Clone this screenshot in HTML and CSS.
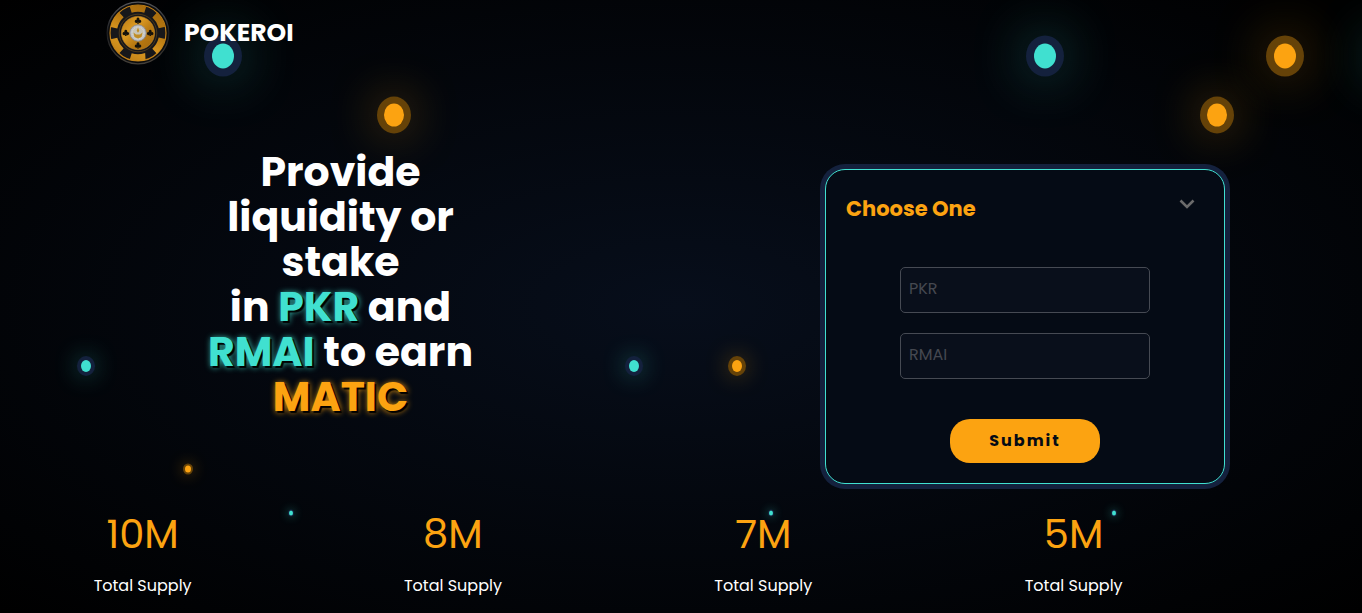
FILE: index.html
```html
<!DOCTYPE html>
<html lang="en">
<head>
<meta charset="utf-8">
<meta name="viewport" content="width=device-width, initial-scale=1">
<title>POKEROI</title>
<link rel="stylesheet" href="styles.css">
</head>
<body>
<div class="bubbles" aria-hidden="true">
  <span class="bubble xl teal" style="left:16.4%;top:56px"></span>
  <span class="bubble lg orange" style="left:28.95%;top:115px"></span>
  <span class="bubble xl teal" style="left:76.75%;top:56px"></span>
  <span class="bubble xl orange" style="left:94.35%;top:56px"></span>
  <span class="bubble lg orange" style="left:89.35%;top:115px"></span>
  <span class="bubble xl teal" style="left:101.9%;top:56px"></span>
  <span class="bubble md teal" style="left:6.33%;top:366px"></span>
  <span class="bubble md teal" style="left:46.55%;top:366px"></span>
  <span class="bubble md orange" style="left:54.12%;top:366px"></span>
  <span class="bubble sm orange" style="left:13.81%;top:469px"></span>
  <span class="bubble xs teal" style="left:21.38%;top:513px"></span>
  <span class="bubble xs teal" style="left:56.62%;top:513px"></span>
  <span class="bubble xs teal" style="left:81.8%;top:513px"></span>
</div>

<header class="header">
  <a class="brand" href="#">
    <svg class="brand-chip" viewBox="0 0 64 64" aria-hidden="true">
      <defs>
        <linearGradient id="gold" x1="0" y1="0" x2="1" y2="1">
          <stop offset="0" stop-color="#b87a14"/>
          <stop offset=".35" stop-color="#dc9a22"/>
          <stop offset=".6" stop-color="#b97a12"/>
          <stop offset="1" stop-color="#a3680c"/>
        </linearGradient>
        <linearGradient id="rim" x1="0" y1="0" x2="0" y2="1">
          <stop offset="0" stop-color="#55565a"/>
          <stop offset=".5" stop-color="#1c1d20"/>
          <stop offset="1" stop-color="#45403a"/>
        </linearGradient>
        <path id="club" d="M0-3.200a1.500 1.500 0 0 1 1.200 2.400 1.500 1.500 0 1 1-.8 2L.9 3H-.9L-.4 1.200a1.500 1.500 0 1 1-.8-2A1.500 1.500 0 0 1 0-3.200z"/>
      </defs>
      <circle cx="32" cy="32" r="30.800" fill="#0b0c0e" stroke="url(#rim)" stroke-width="1.300"/>
      <circle cx="32" cy="32" r="28" fill="#17171a" stroke="#c07f18" stroke-width="1.200"/>
      <circle cx="32" cy="32" r="24.600" fill="none" stroke="url(#gold)" stroke-width="6.800" pathLength="60" stroke-dasharray="5.800 4.200" transform="rotate(-107.400 32 32)"/>
      <circle cx="32" cy="32" r="18.800" fill="none" stroke="#6d4f1c" stroke-width=".6"/>
      <circle cx="32" cy="32" r="16.600" fill="url(#gold)" stroke="#c98c28" stroke-width=".6"/>
      <g fill="#15120b">
        <use href="#club" x="32" y="19.800"/>
        <use href="#club" x="32" y="44.500"/>
        <use href="#club" x="19.800" y="32"/>
        <use href="#club" x="44.200" y="32"/>
      </g>
      <circle cx="32" cy="32" r="8.200" fill="#bfc1c4" stroke="#85868a" stroke-width=".8"/>
      <circle cx="32" cy="32" r="6" fill="#c9c5b6" stroke="#e4e4e4" stroke-width=".8" stroke-dasharray="1 .8"/>
      <path d="M32 26.500l1.300 3.300-1.300 2-1.300-2zM27.500 31.500l2.500 2h4l2.500-2-1 4.500-3.500 1.500-3.500-1.500z" fill="#c08d25"/>
    </svg>
    <span>POKEROI</span>
  </a>
</header>

<main>
  <section class="hero">
    <h1 class="headline">Provide<br>liquidity or<br>stake<br>in <span class="mark-teal">PKR</span> and<br><span class="mark-teal">RMAI</span> to earn<br><span class="mark-orange">MATIC</span></h1>
    <form class="card">
      <div class="picker">
        <select class="picker-select" aria-label="Choose One">
          <option>Choose One</option>
        </select>
        <svg class="picker-arrow" viewBox="0 0 16 10" aria-hidden="true"><path d="M1.500 1.500L8 8l6.500-6.500" fill="none" stroke="#6b6b6b" stroke-width="2.600"/></svg>
      </div>
      <div class="fields">
        <input class="field" type="text" placeholder="PKR" aria-label="PKR">
        <input class="field" type="text" placeholder="RMAI" aria-label="RMAI">
      </div>
      <button class="submit" type="submit">Submit</button>
    </form>
  </section>

  <section class="stats">
    <div class="stat"><strong>10M</strong><span>Total Supply</span></div>
    <div class="stat"><strong>8M</strong><span>Total Supply</span></div>
    <div class="stat"><strong>7M</strong><span>Total Supply</span></div>
    <div class="stat"><strong>5M</strong><span>Total Supply</span></div>
  </section>
</main>
</body>
</html>
```
FILE: styles.css
```css
* { box-sizing: border-box; }

body {
  margin: 0;
  min-height: 100vh;
  position: relative;
  overflow-x: hidden;
  background: radial-gradient(ellipse at center, #070e1b 0%, #000 100%) #000;
  color: #fff;
  font-family: Poppins, Inter, "Open Sans", sans-serif;
  font-size: 16px;
}

/* Floating bubbles behind the page */
.bubbles {
  position: absolute;
  inset: 0;
  overflow: hidden;
  z-index: -1;
}
.teal { --fill: #40e0d0; --ring: #14213d; }
.orange { --fill: #fca311; --ring: #654208; }
.bubble {
  position: absolute;
  border-radius: 50%;
  transform: translate(-50%, -50%);
  background: var(--fill);
  box-shadow: 0 0 0 var(--spread) var(--ring), 0 0 var(--glow) var(--fill);
}
.xl { width: 22px; height: 25px; --spread: 8px; --glow: 56px; }
.lg { width: 20px; height: 23px; --spread: 7px; --glow: 50px; }
.md { width: 10px; height: 12px; --spread: 4px; --glow: 25px; }
.sm { width: 6px; height: 7px; --spread: 2px; --glow: 15px; }
.xs { width: 4px; height: 5px; --spread: 1px; --glow: 10px; }

.header { padding: 1px 106px; }
.brand {
  display: inline-flex;
  align-items: center;
  gap: 14px;
  color: #fff;
  font-size: 25px;
  font-weight: 700;
  text-decoration: none;
}
.brand-chip { width: 64px; height: 64px; }

.hero {
  display: grid;
  grid-template-columns: 1fr 1fr;
  margin-top: 76px;
}
.headline {
  margin: 0;
  font-size: 41px;
  line-height: 45px;
  font-weight: 700;
  text-align: center;
}
.mark-teal {
  color: #40e0d0;
  text-shadow: 2px 2px 1px #000, 1px 1px 6px #40e0d0;
}
.mark-orange {
  color: #fca311;
  text-shadow: 2px 2px 1px #000, 1px 1px 6px #fca311;
}

.card {
  width: 400px;
  max-width: 100%;
  margin: 20px 0 0 144px;
  padding: 20px;
  display: flex;
  flex-direction: column;
  align-items: center;
  gap: 40px;
  border: 1px solid #40e0d0;
  border-radius: 20px;
  background: #050b15;
  box-shadow: 0 0 0 5px #14213d;
}
.picker {
  display: grid;
  width: 100%;
}
.picker > * { grid-area: 1 / 1; }
.picker-select {
  appearance: none;
  width: 100%;
  height: 37px;
  padding: 0;
  border: 0;
  background: none;
  color: #fca311;
  font: inherit;
  font-size: 21px;
  font-weight: 700;
}
.picker-arrow {
  width: 16px;
  height: 10px;
  margin: 9px 9px 0 0;
  justify-self: end;
  pointer-events: none;
}
.fields {
  display: flex;
  flex-direction: column;
  gap: 20px;
}
.field {
  width: 250px;
  height: 46px;
  padding: 0 8px 3px;
  border: 1px solid #464a53;
  border-radius: 5px;
  background: #090f1b;
  color: #fff;
  font: inherit;
}
.field::placeholder { color: #454850; }
.submit {
  width: 150px;
  height: 44px;
  padding: 0 0 2px;
  border: 0;
  border-radius: 20px;
  background: #fca311;
  color: #050b15;
  font: inherit;
  font-weight: 700;
  letter-spacing: 2px;
}

.stats {
  display: flex;
  justify-content: space-between;
  padding: 20px 17.5% 13px 6.8%;
}
.stat {
  display: flex;
  flex-direction: column;
  align-items: center;
  gap: 10px;
  width: 100px;
}
.stat strong {
  color: #fca311;
  font-size: 40px;
  line-height: 60px;
  font-weight: 400;
}
.stat span { line-height: 24px; white-space: nowrap; }
```
